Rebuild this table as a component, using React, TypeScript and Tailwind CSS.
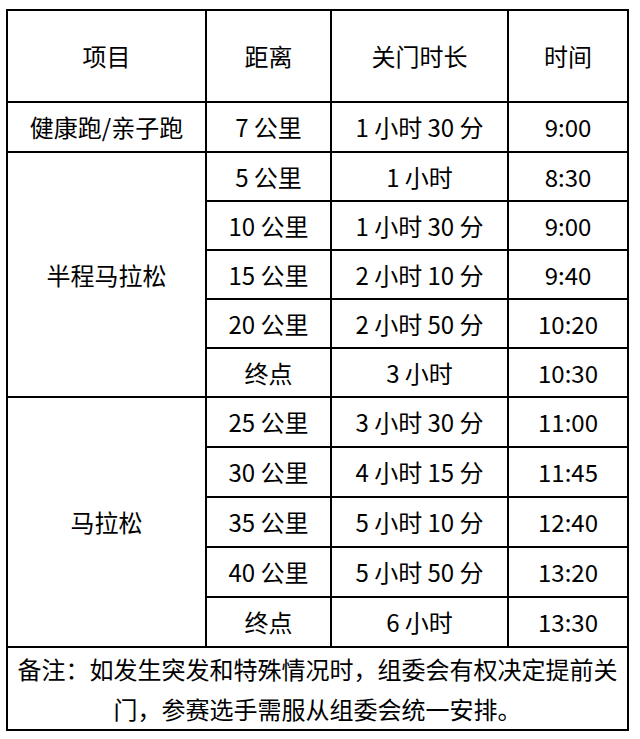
import React from "react";

const cell =
  "border-r-2 border-b-2 border-black flex items-center justify-center text-center";

const half = [
  ["5 公里", "1 小时", "8:30"],
  ["10 公里", "1 小时 30 分", "9:00"],
  ["15 公里", "2 小时 10 分", "9:40"],
  ["20 公里", "2 小时 50 分", "10:20"],
  ["终点", "3 小时", "10:30"],
];

const full = [
  ["25 公里", "3 小时 30 分", "11:00"],
  ["30 公里", "4 小时 15 分", "11:45"],
  ["35 公里", "5 小时 10 分", "12:40"],
  ["40 公里", "5 小时 50 分", "13:20"],
  ["终点", "6 小时", "13:30"],
];

export default function App() {
  return (
    <div
      className="w-[640px] h-[739px] bg-white pl-[6px] pt-[9px] text-[24px] text-black"
      style={{ fontFamily: '"Noto Sans CJK SC", "Noto Sans", sans-serif' }}
    >
      <div className="w-[623px] border-l-2 border-t-2 border-black grid grid-cols-[199px_125px_177px_120px] grid-rows-[92px_50px_49px_49px_49px_49px_49px_50px_50px_50px_50px_50px_83px]">
        <div className={cell}>项目</div>
        <div className={cell}>距离</div>
        <div className={cell}>关门时长</div>
        <div className={cell}>时间</div>

        <div className={cell}>健康跑/亲子跑</div>
        <div className={cell}>7 公里</div>
        <div className={cell}>1 小时 30 分</div>
        <div className={cell}>9:00</div>

        <div className={`${cell} row-span-5`}>半程马拉松</div>
        {half.map((r, i) => (
          <React.Fragment key={"h" + i}>
            <div className={cell}>{r[0]}</div>
            <div className={cell}>{r[1]}</div>
            <div className={cell}>{r[2]}</div>
          </React.Fragment>
        ))}

        <div className={`${cell} row-span-5`}>马拉松</div>
        {full.map((r, i) => (
          <React.Fragment key={"f" + i}>
            <div className={cell}>{r[0]}</div>
            <div className={cell}>{r[1]}</div>
            <div className={cell}>{r[2]}</div>
          </React.Fragment>
        ))}

        <div className="col-span-4 border-r-2 border-b-2 border-black flex items-center justify-center text-center px-[4px] leading-[40px]">
          备注：如发生突发和特殊情况时，组委会有权决定提前关门，参赛选手需服从组委会统一安排。
        </div>
      </div>
    </div>
  );
}
